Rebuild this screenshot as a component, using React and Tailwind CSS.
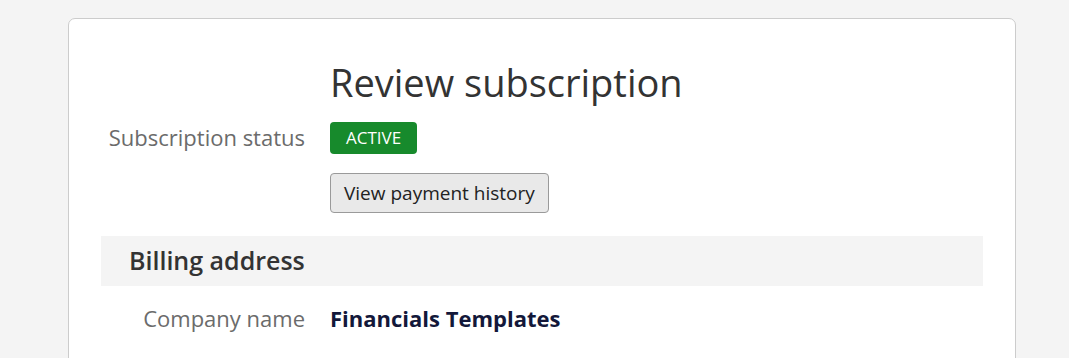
export default function App() {
  return (
    <div className="min-h-screen bg-[#f4f4f4] pt-[18px] pl-[68px] pr-[53px] font-['Open_Sans',sans-serif]">
      <div className="min-h-[360px] rounded-[7px] border border-[#cccccc] bg-white px-8 pt-[40px]">
        <div className="grid grid-cols-[229px_1fr]">
          <div />
          <h1 className="text-[38px] leading-[46px] font-normal text-[#333333]">Review subscription</h1>

          <div className="pr-[25px] pt-[16px] text-right text-[22px] leading-[32px] text-[#6b6b6b]">
            Subscription status
          </div>
          <div className="pt-[17px]">
            <span className="inline-flex h-8 items-center rounded-[4px] bg-[#178a2c] px-4 text-[17px] text-white">
              ACTIVE
            </span>
          </div>

          <div />
          <div className="pt-[19px]">
            <button className="h-10 rounded-[4px] border border-[#9a9a9a] bg-[#e9e9e9] px-[13px] text-[19px] text-[#222222]">
              View payment history
            </button>
          </div>
        </div>

        <div className="mt-[23px] flex h-[50px] items-center bg-[#f4f4f4] pl-7">
          <h2 className="text-[25px] font-semibold text-[#333333]">Billing address</h2>
        </div>

        <div className="grid grid-cols-[229px_1fr] pt-[16px]">
          <div className="pr-[25px] text-right text-[22px] leading-[32px] text-[#6b6b6b]">Company name</div>
          <div className="text-[22px] leading-[32px] font-bold text-[#13183a]">Financials Templates</div>
        </div>
      </div>
    </div>
  );
}
